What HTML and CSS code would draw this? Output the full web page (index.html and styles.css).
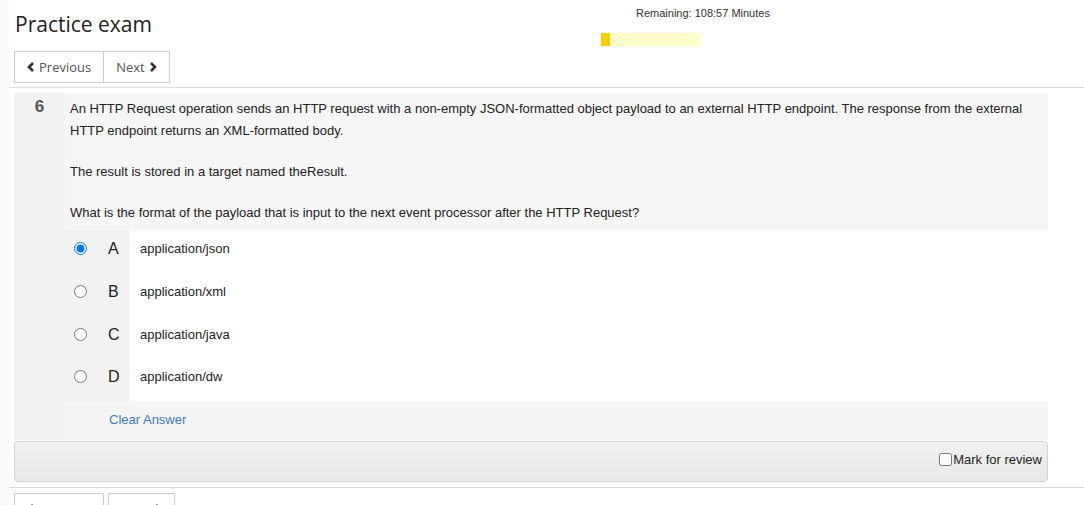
FILE: index.html
```html
<!DOCTYPE html>
<html lang="en">
<head>
<meta charset="utf-8">
<title>Practice exam</title>
<link rel="stylesheet" href="styles.css">
</head>
<body>
<div class="page">
  <header class="header">
    <div class="header-left">
      <h1 class="title">Practice exam</h1>
      <div class="btn-group">
        <button class="btn"><svg class="chev" viewBox="0 0 8 10" width="8" height="10"><polyline points="6,1 2,5 6,9"/></svg>Previous</button>
        <button class="btn btn-joined">Next<svg class="chev chev-r" viewBox="0 0 8 10" width="8" height="10"><polyline points="2,1 6,5 2,9"/></svg></button>
      </div>
    </div>
    <div class="timer">
      <div class="timer-text">Remaining: 108:57 Minutes</div>
      <div class="timer-bar"><div class="timer-fill" style="width:9px"></div></div>
    </div>
  </header>

  <hr class="rule">

  <section class="question">
    <div class="qnum">6</div>
    <div class="qbody">
      <div class="qtext">
        <p>An HTTP Request operation sends an HTTP request with a non-empty JSON-formatted object payload to an external HTTP endpoint. The response from the external HTTP endpoint returns an XML-formatted body.</p>
        <p>The result is stored in a target named theResult.</p>
        <p>What is the format of the payload that is input to the next event processor after the HTTP Request?</p>
      </div>
      <div class="option">
        <div class="opt-ctrl"><input type="radio" name="ans" checked><span class="letter">A</span></div>
        <div class="opt-text">application/json</div>
      </div>
      <div class="option">
        <div class="opt-ctrl"><input type="radio" name="ans"><span class="letter">B</span></div>
        <div class="opt-text">application/xml</div>
      </div>
      <div class="option">
        <div class="opt-ctrl"><input type="radio" name="ans"><span class="letter">C</span></div>
        <div class="opt-text">application/java</div>
      </div>
      <div class="option">
        <div class="opt-ctrl"><input type="radio" name="ans"><span class="letter">D</span></div>
        <div class="opt-text">application/dw</div>
      </div>
      <div class="clear-row"><a class="clear-link" href="#">Clear Answer</a></div>
    </div>
  </section>

  <div class="panel-footer">
    <label class="review"><input type="checkbox">Mark for review</label>
  </div>

  <hr class="rule rule-bottom">

  <div class="bottom-nav">
    <button class="btn"><svg class="chev" viewBox="0 0 8 10" width="8" height="10"><polyline points="6,1 2,5 6,9"/></svg>Previous</button>
    <button class="btn">Next<svg class="chev chev-r" viewBox="0 0 8 10" width="8" height="10"><polyline points="2,1 6,5 2,9"/></svg></button>
  </div>
</div>
</body>
</html>
```

FILE: styles.css
```css
html, body {
  margin: 0;
  padding: 0;
}
body {
  background: #fafafa;
  font-family: "Liberation Sans", Arial, sans-serif;
  color: #222;
  overflow: hidden;
}
.page {
  margin-left: 9px;
  background: #fff;
  min-height: 505px;
  padding-left: 5px;
}
.header {
  display: flex;
  width: 1034px;
}
.header-left {
  width: 587px;
}
.title {
  margin: 9px 0 0 1px;
  font-family: "Open Sans", sans-serif;
  font-weight: 400;
  font-size: 21px;
  line-height: 30px;
  color: #222;
}
.btn-group {
  display: flex;
  margin-top: 12px;
}
.btn {
  display: flex;
  align-items: center;
  height: 32px;
  padding: 0 12px;
  background: #fff;
  border: 1px solid #ccc;
  font-family: "Open Sans", sans-serif;
  font-size: 13px;
  color: #555;
  cursor: pointer;
}
.btn-joined {
  margin-left: -1px;
}
.chev {
  fill: none;
  stroke: #333;
  stroke-width: 2.6;
  margin-right: 4px;
}
.chev-r {
  margin-right: 0;
  margin-left: 4px;
}
.timer {
  padding-top: 6px;
}
.timer-text {
  font-size: 11px;
  line-height: 14px;
  color: #333;
  padding-left: 35px;
}
.timer-bar {
  margin-top: 13px;
  width: 100px;
  height: 13px;
  background: #ffffcc;
}
.timer-fill {
  height: 100%;
  background: #ffcc00;
}
.rule {
  border: 0;
  border-top: 1px solid #dcdcdc;
  margin: 4px 0 5px -5px;
  width: 1080px;
}
.question {
  display: flex;
  width: 1034px;
  background: #f2f2f2;
}
.qnum {
  width: 51px;
  flex: none;
  text-align: center;
  font-weight: 700;
  font-size: 17px;
  line-height: 22px;
  padding-top: 3px;
  color: #555;
}
.qbody {
  flex: 1;
}
.qtext {
  background: #f6f6f6;
  padding: 5px 14px 6px 5px;
  font-size: 13px;
  line-height: 22px;
}
.qtext p {
  margin: 0 0 19px;
}
.qtext p:last-child {
  margin-bottom: 0;
}
.option {
  display: flex;
  height: 42.75px;
  font-size: 13px;
}
.opt-ctrl {
  width: 65px;
  flex: none;
  display: flex;
  align-items: flex-start;
  padding-top: 9px;
  box-sizing: border-box;
  padding-left: 9px;
}
.opt-ctrl input {
  margin: 3px 0 0 0;
  width: 13px;
  height: 13px;
}
.letter {
  margin-left: 21px;
  font-size: 16px;
  line-height: 20px;
}
.opt-text {
  flex: 1;
  background: #fff;
  padding: 9px 0 0 10px;
  line-height: 20px;
}
.clear-row {
  height: 39px;
  box-sizing: border-box;
  background: #f5f5f5;
  padding: 8px 0 0 44px;
  line-height: 20px;
}
.clear-link {
  color: #3b7bbf;
  text-decoration: none;
  font-size: 13px;
}
.panel-footer {
  width: 1034px;
  box-sizing: border-box;
  height: 41px;
  margin-top: 1px;
  border: 1px solid #d2d2d2;
  border-radius: 4px;
  background: linear-gradient(#f0f0f0, #e9e9e9);
  display: flex;
  justify-content: flex-end;
  padding: 7px 5px 0 0;
}
.review {
  display: flex;
  align-items: center;
  height: 20px;
  font-size: 13px;
  color: #222;
}
.review input {
  margin: 0 1px 0 0;
  width: 13px;
  height: 13px;
}
.rule-bottom {
  margin-top: 5px;
  margin-bottom: 5px;
}
.bottom-nav {
  display: flex;
  gap: 4px;
}
```
